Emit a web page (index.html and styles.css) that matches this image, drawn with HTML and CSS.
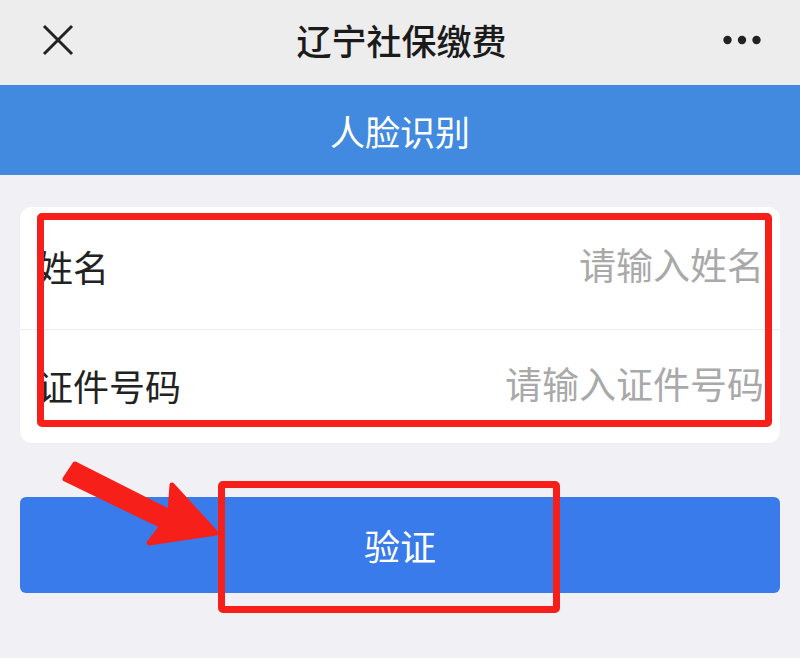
FILE: index.html
```html
<!DOCTYPE html>
<html>
<head>
    <title>辽宁社保缴费</title>
    <meta charset="UTF-8">
    <link rel="stylesheet" href="styles.css">
</head>
<body>
    <!-- Barre de titre -->
    <div class="topbar">
        <svg class="icon-close" width="32" height="32" viewBox="0 0 32 32">
            <path d="M2 2 L30 30 M30 2 L2 30" stroke="#222" stroke-width="3" fill="none"/>
        </svg>
        <div class="topbar-title">辽宁社保缴费</div>
        <svg class="icon-more" width="38" height="10" viewBox="0 0 38 10">
            <circle cx="4.5" cy="5" r="4.2" fill="#222"/>
            <circle cx="19" cy="5" r="4.2" fill="#222"/>
            <circle cx="33.5" cy="5" r="4.2" fill="#222"/>
        </svg>
    </div>

    <div class="subbar">人脸识别</div>

    <div class="content">
        <!-- Formulaire -->
        <form class="card" id="faceForm">
            <div class="row row-first">
                <label for="nom">姓名</label>
                <input type="text" id="nom" placeholder="请输入姓名">
            </div>
            <div class="row">
                <label for="idno">证件号码</label>
                <input type="text" id="idno" placeholder="请输入证件号码">
            </div>
            <div class="mark mark-form"></div>
        </form>

        <div class="btn-wrap">
            <button type="button" class="btn">验证</button>
            <div class="mark mark-btn"></div>
            <svg class="arrow" width="170" height="90" viewBox="0 0 170 90">
                <polygon points="20,4 115,52 117,25 161,73 94,83 107,66 10,19"
                         fill="#f61f1a" stroke="#f61f1a" stroke-width="5" stroke-linejoin="round"/>
            </svg>
        </div>
    </div>
</body>
</html>
```

FILE: styles.css
```css
body {
    margin: 0;
    background-color: #f0f0f5;
    font-family: "Noto Sans CJK SC", "Noto Sans", sans-serif;
    width: 800px;
    height: 658px;
    overflow: hidden;
}
.topbar {
    height: 85px;
    background-color: #ededed;
    display: grid;
    grid-template-columns: 1fr auto 1fr;
    align-items: center;
    padding: 0 39px 0 42px;
}
.icon-close {
    justify-self: start;
    margin-top: -5px;
}
.topbar-title {
    font-size: 35px;
    font-weight: 500;
    color: #1b1b1b;
    margin-top: -6px;
}
.icon-more {
    justify-self: end;
    margin-top: -6px;
}
.subbar {
    height: 90px;
    background-color: #428ae0;
    color: #fff;
    font-size: 35px;
    display: flex;
    align-items: center;
    justify-content: center;
}
.content {
    padding: 32px 20px 0;
}
.card {
    position: relative;
    background-color: #fff;
    border-radius: 12px;
    margin: 0;
}
.row {
    height: 113px;
    display: flex;
    align-items: center;
    padding: 0 16px 0 17px;
}
.row-first {
    height: 122px;
    border-bottom: 1px solid #efefef;
}
.row label {
    font-size: 36px;
    color: #222;
    white-space: nowrap;
    margin-top: -4px;
}
.row input {
    flex: 1;
    min-width: 0;
    border: none;
    outline: none;
    background: transparent;
    text-align: right;
    font-family: inherit;
    font-size: 37px;
    color: #222;
    padding: 0;
    margin-top: -8px;
}
.row input::placeholder {
    color: #a9a9a9;
}
.mark {
    position: absolute;
    border: 7px solid #f61f1a;
    border-radius: 5px;
    box-sizing: border-box;
}
.mark-form {
    left: 17px;
    top: 6px;
    right: 8px;
    height: 214px;
}
.btn-wrap {
    position: relative;
    margin-top: 54px;
}
.btn {
    display: block;
    width: 100%;
    height: 96px;
    background-color: #397bea;
    color: #fff;
    border: none;
    border-radius: 6px;
    font-family: inherit;
    font-size: 36px;
    cursor: pointer;
}
.mark-btn {
    left: 198px;
    top: -16px;
    width: 342px;
    height: 132px;
}
.arrow {
    position: absolute;
    left: 35px;
    top: -37px;
}
```
